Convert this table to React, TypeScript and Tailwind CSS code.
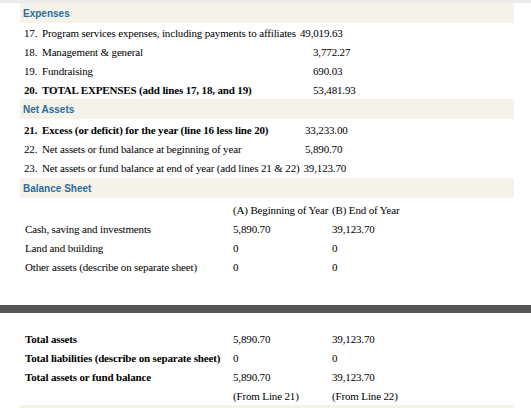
import React from 'react'

const serif = { fontFamily: '"Liberation Serif", "Times New Roman", serif', letterSpacing: '-0.15px' }

function Band({ title }: { title: string }) {
  return (
    <div className="h-[20px] bg-[#f5f2ea] flex items-center pl-[3px] pt-[1px]">
      <span className="text-[10px] font-bold text-[#2b6c9e] tracking-normal" style={{ fontFamily: '"Liberation Sans", Arial, sans-serif' }}>
        {title}
      </span>
    </div>
  )
}

function Line({ num, label, value, bold, labelW }: { num: string; label: string; value: string; bold?: boolean; labelW?: string }) {
  return (
    <div className={`h-[19px] flex items-center pl-[4px] pt-[2px] text-[11px] text-black ${bold ? 'font-bold' : ''}`}>
      <span className={`flex shrink-0 whitespace-nowrap ${labelW ?? 'mr-[4px]'}`}>
        <span className="w-[18px]">{num}</span>
        <span>{label}</span>
      </span>
      <span className="font-normal whitespace-nowrap">{value}</span>
    </div>
  )
}

function Row({ label, a, b, bold }: { label: string; a: string; b: string; bold?: boolean }) {
  return (
    <div className="h-[19px] flex items-center pl-[5px] pt-[1px] text-[11px] text-black">
      <span className={`w-[208px] shrink-0 whitespace-nowrap ${bold ? 'font-bold' : ''}`}>{label}</span>
      <span className="w-[99px] shrink-0 whitespace-nowrap">{a}</span>
      <span className="whitespace-nowrap">{b}</span>
    </div>
  )
}

export default function App() {
  return (
    <div className="w-[531px] h-[408px] bg-white overflow-hidden" style={serif}>
      <div className="h-[3px] bg-[#ebebeb]" />
      <div className="ml-[20px] w-[494px]">
        <Band title="Expenses" />
        <Line num="17." label="Program services expenses, including payments to affiliates" value="49,019.63" />
        <Line num="18." label="Management & general" value="3,772.27" labelW="w-[289px]" />
        <Line num="19." label="Fundraising" value="690.03" labelW="w-[289px]" />
        <Line num="20." label="TOTAL EXPENSES (add lines 17, 18, and 19)" value="53,481.93" bold labelW="w-[289px]" />
        <Band title="Net Assets" />
        <div className="h-[1px]" />
        <Line num="21." label="Excess (or deficit) for the year (line 16 less line 20)" value="33,233.00" bold labelW="w-[281px]" />
        <Line num="22." label="Net assets or fund balance at beginning of year" value="5,890.70" labelW="w-[281px]" />
        <Line num="23." label="Net assets or fund balance at end of year (add lines 21 & 22)" value="39,123.70" />
        <div className="h-[1px]" />
        <Band title="Balance Sheet" />
        <div className="h-[2px]" />
        <Row label="" a="(A) Beginning of Year" b="(B) End of Year" />
        <Row label="Cash, saving and investments" a="5,890.70" b="39,123.70" />
        <Row label="Land and building" a="0" b="0" />
        <Row label="Other assets (describe on separate sheet)" a="0" b="0" />
      </div>
      <div className="h-[29px]" />
      <div className="h-[8px] bg-[#555555]" />
      <div className="ml-[20px] w-[494px]">
        <div className="h-[16px]" />
        <Row label="Total assets" a="5,890.70" b="39,123.70" bold />
        <Row label="Total liabilities (describe on separate sheet)" a="0" b="0" bold />
        <Row label="Total assets or fund balance" a="5,890.70" b="39,123.70" bold />
        <Row label="" a="(From Line 21)" b="(From Line 22)" />
        <div className="h-[20px] bg-[#f5f2ea]" />
      </div>
    </div>
  )
}
